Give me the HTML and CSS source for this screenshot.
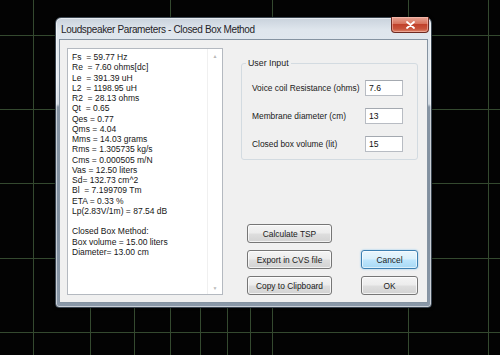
FILE: index.html
```html
<!DOCTYPE html>
<html>
<head>
<meta charset="utf-8">
<link rel="stylesheet" href="styles.css">
</head>
<body>
<svg class="grid" width="500" height="355" viewBox="0 0 500 355">
  <g class="grid-lines">
    <line x1="0" y1="35.5" x2="500" y2="35.5"/>
    <line x1="0" y1="109.5" x2="500" y2="109.5"/>
    <line x1="0" y1="183.5" x2="500" y2="183.5"/>
    <line x1="0" y1="258.5" x2="500" y2="258.5"/>
    <line x1="0" y1="332.5" x2="500" y2="332.5"/>
    <line x1="33.5" y1="0" x2="33.5" y2="355"/>
    <line x1="170.5" y1="0" x2="170.5" y2="355"/>
    <line x1="272.5" y1="0" x2="272.5" y2="355"/>
    <line x1="408.5" y1="0" x2="408.5" y2="355"/>
    <line x1="488.5" y1="0" x2="488.5" y2="355"/>
    <line x1="90.5" y1="305" x2="90.5" y2="355"/>
    <line x1="134.5" y1="305" x2="134.5" y2="355"/>
    <line x1="200.5" y1="305" x2="200.5" y2="355"/>
    <line x1="227.5" y1="305" x2="227.5" y2="355"/>
    <line x1="250.5" y1="305" x2="250.5" y2="355"/>
  </g>
</svg>

<div class="window">
  <div class="titlebar">
    <span class="title">Loudspeaker Parameters - Closed Box Method</span>
    <button class="close" aria-label="Close">
      <svg width="9" height="8" viewBox="0 0 9 8"><path d="M1 1 L8 7 M8 1 L1 7" stroke="#fff" stroke-width="1.8" stroke-linecap="round"/></svg>
    </button>
  </div>
  <div class="client">
    <div class="results">
      <pre class="results-text">Fs  = 59.77 Hz
Re  = 7.60 ohms[dc]
Le  = 391.39 uH
L2  = 1198.95 uH
R2  = 28.13 ohms
Qt  = 0.65
Qes = 0.77
Qms = 4.04
Mms = 14.03 grams
Rms = 1.305735 kg/s
Cms = 0.000505 m/N
Vas = 12.50 liters
Sd= 132.73 cm^2
Bl  = 7.199709 Tm
ETA = 0.33 %
Lp(2.83V/1m) = 87.54 dB

Closed Box Method:
Box volume = 15.00 liters
Diameter= 13.00 cm</pre>
      <div class="scrollbar">
        <span class="arrow">&#9650;</span>
        <span class="arrow">&#9660;</span>
      </div>
    </div>
    <div class="side">
      <div class="group">
        <span class="legend">User Input</span>
        <div class="field">
          <span class="label">Voice coil Resistance (ohms)</span>
          <span class="input">7.6</span>
        </div>
        <div class="field">
          <span class="label">Membrane diameter (cm)</span>
          <span class="input">13</span>
        </div>
        <div class="field">
          <span class="label">Closed box volume (lit)</span>
          <span class="input">15</span>
        </div>
      </div>
      <div class="buttons">
        <button class="btn">Calculate TSP</button>
        <span></span>
        <button class="btn">Export in CVS file</button>
        <button class="btn btn-default">Cancel</button>
        <button class="btn">Copy to Clipboard</button>
        <button class="btn">OK</button>
      </div>
    </div>
  </div>
</div>
</body>
</html>
```

FILE: styles.css
```css
html, body {
  margin: 0;
  padding: 0;
}
body {
  width: 500px;
  height: 355px;
  background: #030303;
  position: relative;
  overflow: hidden;
  font-family: "Liberation Sans", Arial, sans-serif;
}
.grid {
  position: absolute;
  left: 0;
  top: 0;
}
.grid-lines line {
  stroke: #34492f;
  stroke-width: 1;
}

.window {
  position: absolute;
  left: 55px;
  top: 17px;
  width: 375px;
  height: 289px;
  border: 1px solid #3a4550;
  border-radius: 6px 6px 4px 4px;
  background: linear-gradient(to bottom,
    #c9d2dc 0px, #dfe6ed 12px, #e3e9ef 60px, #d3dbe3 86px,
    #8795a4 89px, #7f8e9e 200px, #8a98a8 289px);
  box-shadow: inset 0 0 0 1px rgba(255,255,255,0.55), 0 0 3px rgba(0,0,0,0.6);
  display: flex;
  flex-direction: column;
}
.titlebar {
  height: 22px;
  display: flex;
  align-items: flex-start;
  padding-left: 5px;
}
.title {
  margin-top: 6px;
  font-family: "Liberation Sans", Arial, sans-serif;
  font-size: 10px;
  letter-spacing: -0.35px;
  color: #1f2328;
}
.close {
  margin-left: auto;
  margin-right: 2px;
  margin-top: -1px;
  width: 38px;
  height: 16px;
  padding: 0;
  border: 1px solid #6e2a22;
  border-top: none;
  border-radius: 0 0 4px 4px;
  background: linear-gradient(to bottom, #e7a595 0%, #d7725c 45%, #c0412b 50%, #c9543c 80%, #dc8a70 100%);
  box-shadow: inset 0 0 0 1px rgba(255,200,190,0.5);
  display: flex;
  align-items: center;
  justify-content: center;
}

.client {
  margin: 0 4px 4px 4px;
  height: 262px;
  background: #f0f0f0;
  box-shadow: 0 0 0 1px #8593a1;
  display: flex;
  padding: 8px 9px 7px 7px;
  box-sizing: border-box;
}

.results {
  width: 156px;
  height: 247px;
  box-sizing: border-box;
  border: 1px solid #b4b9c0;
  background: #fff;
  display: flex;
}
.results-text {
  flex: 1;
  margin: 0;
  padding: 3px 0 0 4px;
  font-family: "Liberation Sans", Arial, sans-serif;
  font-size: 8.5px;
  line-height: 10.25px;
  color: #161616;
  white-space: pre;
}
.scrollbar {
  width: 14px;
  display: flex;
  flex-direction: column;
  justify-content: space-between;
  align-items: center;
  padding: 4px 0 3px;
  border-left: 1px solid #f0f0f0;
}
.arrow {
  font-size: 5px;
  color: #b9b9b9;
  line-height: 6px;
}

.side {
  margin-left: 18px;
  width: 177px;
  padding-top: 15px;
  display: flex;
  flex-direction: column;
}
.group {
  position: relative;
  height: 105px;
  border: 1px solid #d3dbe1;
  border-radius: 3px;
  padding: 16px 0 0 10px;
  display: flex;
  flex-direction: column;
  gap: 12px;
}
.legend {
  position: absolute;
  left: 4px;
  top: -6px;
  padding: 0 2px;
  background: #f0f0f0;
  font-size: 8.8px;
  color: #1a1a1a;
}
.field {
  display: flex;
  align-items: center;
  height: 16px;
}
.label {
  width: 113px;
  font-size: 8.4px;
  color: #1a1a1a;
  white-space: nowrap;
}
.input {
  width: 38px;
  height: 16px;
  box-sizing: border-box;
  border: 1px solid #b8bcc3;
  border-top-color: #a4a9b0;
  background: #fff;
  font-size: 8.6px;
  line-height: 14px;
  padding-left: 3px;
  color: #111;
}

.buttons {
  margin-top: 64px;
  margin-left: 6px;
  display: grid;
  grid-template-columns: 85px 57px;
  column-gap: 29px;
  row-gap: 7px;
}
.btn {
  height: 19px;
  padding: 0;
  border: 1px solid #767676;
  border-radius: 3px;
  background: linear-gradient(to bottom, #f4f4f4 0%, #ececec 48%, #dedede 52%, #d2d2d2 100%);
  box-shadow: inset 0 0 0 1px rgba(255,255,255,0.7);
  font-family: "Liberation Sans", Arial, sans-serif;
  font-size: 8.4px;
  color: #1a1a1a;
}
.btn-default {
  border-color: #3c7fb1;
  background: linear-gradient(to bottom, #eaf6fd 0%, #d9f0fc 48%, #bee6fd 52%, #a7d9f5 100%);
  box-shadow: inset 0 0 0 1px rgba(255,255,255,0.6), 0 0 2px #7ec0ee;
}
```
